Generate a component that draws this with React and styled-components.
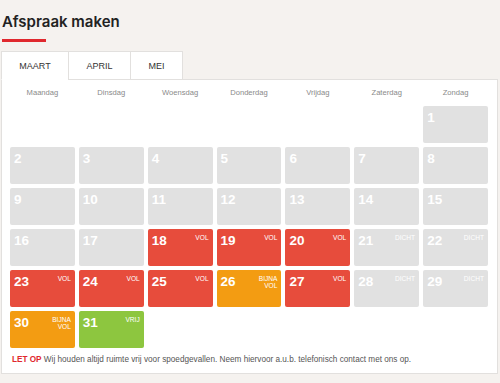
import React from "react";
import styled, { createGlobalStyle } from "styled-components";

const GlobalStyle = createGlobalStyle`
  *, *::before, *::after {
    box-sizing: border-box;
  }
  body {
    margin: 0;
    background: #f5f2ef;
    font-family: "Liberation Sans", Arial, sans-serif;
  }
`;

const Page = styled.div`
  padding: 11px 2px 0 1px;
`;

const Title = styled.h1`
  margin: 0 0 0 1px;
  font-family: Inter, "Open Sans", sans-serif;
  font-weight: 600;
  font-size: 15px;
  line-height: 21px;
  color: #222;
`;

const Underline = styled.div`
  width: 44px;
  height: 3px;
  margin: 7px 0 0 1px;
  background: #e0282e;
`;

const Tabs = styled.div`
  display: flex;
  margin-top: 9px;
  position: relative;
  z-index: 1;
`;

const Tab = styled.div`
  width: ${(p) => p.w}px;
  height: 29px;
  display: flex;
  align-items: center;
  justify-content: center;
  background: #fff;
  border: 1px solid #e2e0de;
  border-bottom-color: ${(p) => (p.active ? "#fff" : "#e2e0de")};
  margin-left: -1px;
  font-size: 9px;
  color: #333;
  &:first-child {
    margin-left: 0;
  }
`;

const Panel = styled.div`
  background: #fff;
  border: 1px solid #e2e0de;
  margin-top: -1px;
  padding: 0 9px 9px 8px;
`;

const Weekdays = styled.div`
  display: grid;
  grid-template-columns: repeat(7, 1fr);
  column-gap: 4px;
  height: 26px;
  padding-bottom: 2px;
  align-items: center;
`;

const Weekday = styled.div`
  text-align: center;
  font-size: 7.6px;
  color: #8a8a8a;
`;

const Grid = styled.div`
  display: grid;
  grid-template-columns: repeat(7, 1fr);
  grid-auto-rows: 37px;
  gap: 4px;
`;

const colors = {
  closed: "#e1e1e1",
  full: "#e74c3c",
  almost: "#f39c12",
  free: "#8dc63f",
};

const Day = styled.div`
  grid-column: ${(p) => p.col};
  background: ${(p) => colors[p.kind]};
  border-radius: 2px;
  display: flex;
  justify-content: space-between;
  align-items: flex-start;
  padding: 4px 4px 0 4px;
  color: #fff;
`;

const Num = styled.span`
  font-weight: bold;
  font-size: 13.5px;
  line-height: 15px;
`;

const Status = styled.span`
  font-size: 6.6px;
  line-height: 7px;
  text-align: right;
  text-transform: uppercase;
  padding-top: 1px;
`;

const Note = styled.p`
  margin: 7px 0 0 2px;
  font-size: 8.2px;
  color: #555;
`;

const Warn = styled.b`
  color: #e0282e;
`;

const labels = {
  closed: "",
  full: "Vol",
  almost: "Bijna vol",
  free: "Vrij",
};

// dag -> status; dagen zonder status zijn grijs zonder label
const status = {
  18: "full", 19: "full", 20: "full", 21: "dicht", 22: "dicht",
  23: "full", 24: "full", 25: "full", 26: "almost", 27: "full",
  28: "dicht", 29: "dicht", 30: "almost", 31: "free",
};

const days = ["Maandag", "Dinsdag", "Woensdag", "Donderdag", "Vrijdag", "Zaterdag", "Zondag"];

export default function App() {
  const cells = [];
  for (let d = 1; d <= 31; d++) {
    const s = status[d];
    const kind = s && s !== "dicht" ? s : "closed";
    const label = s === "dicht" ? "Dicht" : labels[kind];
    cells.push(
      <Day key={d} kind={kind} col={d === 1 ? 7 : "auto"}>
        <Num>{d}</Num>
        {label && (
          <Status>
            {label === "Bijna vol" ? (
              <>
                Bijna
                <br />
                vol
              </>
            ) : (
              label
            )}
          </Status>
        )}
      </Day>
    );
  }

  return (
    <Page>
      <GlobalStyle />
      <Title>Afspraak maken</Title>
      <Underline />
      <Tabs>
        <Tab w={68} active>MAART</Tab>
        <Tab w={63}>APRIL</Tab>
        <Tab w={53}>MEI</Tab>
      </Tabs>
      <Panel>
        <Weekdays>
          {days.map((d) => (
            <Weekday key={d}>{d}</Weekday>
          ))}
        </Weekdays>
        <Grid>{cells}</Grid>
        <Note>
          <Warn>LET OP</Warn> Wij houden altijd ruimte vrij voor spoedgevallen. Neem hiervoor a.u.b. telefonisch contact met ons op.
        </Note>
      </Panel>
    </Page>
  );
}
